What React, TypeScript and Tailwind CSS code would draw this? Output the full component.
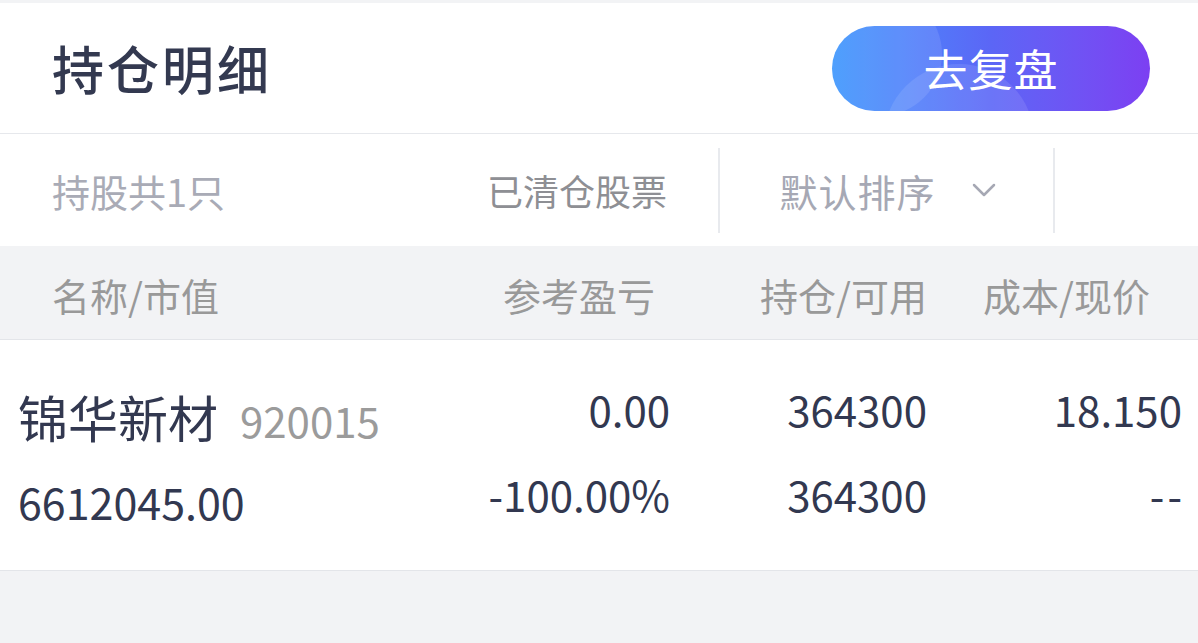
import { ChevronDown } from 'lucide-react';

const font = { fontFamily: '"Noto Sans CJK SC", "Noto Sans", sans-serif' };

export default function App() {
    return (
        <div className="w-[1198px] h-[643px] bg-[#f2f3f5] overflow-hidden" style={font}>
            {/* top strip */}
            <div className="h-[3px]" />

            {/* header */}
            <div className="flex h-[131px] items-center justify-between border-b border-[#e6e8ec] bg-white pl-[52px] pr-[48px]">
                <h1 className="text-[52px] leading-none font-medium tracking-[3px] text-[#333950]">持仓明细</h1>
                <button className="relative h-[85px] w-[318px] overflow-hidden rounded-full bg-gradient-to-r from-[#3a95fd] via-[#5b66f6] to-[#7c3ff2] text-[44px] text-white">
                    <span className="absolute -left-[14px] -top-[34px] h-[124px] w-[124px] rounded-full bg-white/10" />
                    <span className="absolute left-[52px] top-[38px] h-[150px] w-[150px] rounded-full bg-white/10" />
                    <span className="relative tracking-[1px]">去复盘</span>
                </button>
            </div>

            {/* filter row */}
            <div className="flex h-[112px] items-center bg-white pl-[52px]">
                <div className="flex-1 text-[38px] text-[#a9abb6]">持股共1只</div>
                <div className="w-[231px] text-[36px] text-[#8e8f94]">已清仓股票</div>
                <div className="h-[85px] w-[2px] bg-[#e8eaee]" />
                <div className="flex w-[333px] items-center justify-center gap-[28px] pl-[10px] text-[38px] text-[#a6a8b4]">
                    <span className="tracking-[1px]">默认排序</span>
                    <ChevronDown size={40} strokeWidth={1.5} className="text-[#a6a8b4]" />
                </div>
                <div className="h-[85px] w-[2px] bg-[#e8eaee]" />
                <div className="w-[143px]" />
            </div>

            {/* column header */}
            <div className="flex h-[94px] items-center border-b border-[#e3e5e9] bg-[#f2f3f5] pl-[52px] pr-[48px] pt-[4px] text-[38px] text-[#999999]">
                <div className="flex-1">名称/市值</div>
                <div className="w-[200px] text-right">参考盈亏</div>
                <div className="w-[272px] text-right">持仓/可用</div>
                <div className="w-[223px] text-right">成本/现价</div>
            </div>

            {/* position row */}
            <div className="flex h-[231px] border-b border-[#e3e5e9] bg-white pl-[18px] pr-[16px] text-[#323850]">
                <div className="flex-1 pt-[43px]">
                    <div className="flex items-baseline leading-[66px]">
                        <span className="text-[50px]">锦华新材</span>
                        <span className="ml-[22px] text-[42px] text-[#9b9b9b]">920015</span>
                    </div>
                    <div className="mt-[15px] text-[43px] leading-[66px]">6612045.00</div>
                </div>
                <div className="w-[220px] pt-[37px] text-right text-[42px]">
                    <div className="leading-[64px]">0.00</div>
                    <div className="mt-[21px] leading-[64px]">-100.00%</div>
                </div>
                <div className="w-[257px] pt-[37px] text-right text-[42px]">
                    <div className="leading-[64px]">364300</div>
                    <div className="mt-[21px] leading-[64px]">364300</div>
                </div>
                <div className="w-[255px] pt-[37px] text-right text-[42px]">
                    <div className="leading-[64px]">18.150</div>
                    <div className="mt-[21px] leading-[64px]">
                        <span className="-mr-[3px] tracking-[3px]">--</span>
                    </div>
                </div>
            </div>
        </div>
    );
}
